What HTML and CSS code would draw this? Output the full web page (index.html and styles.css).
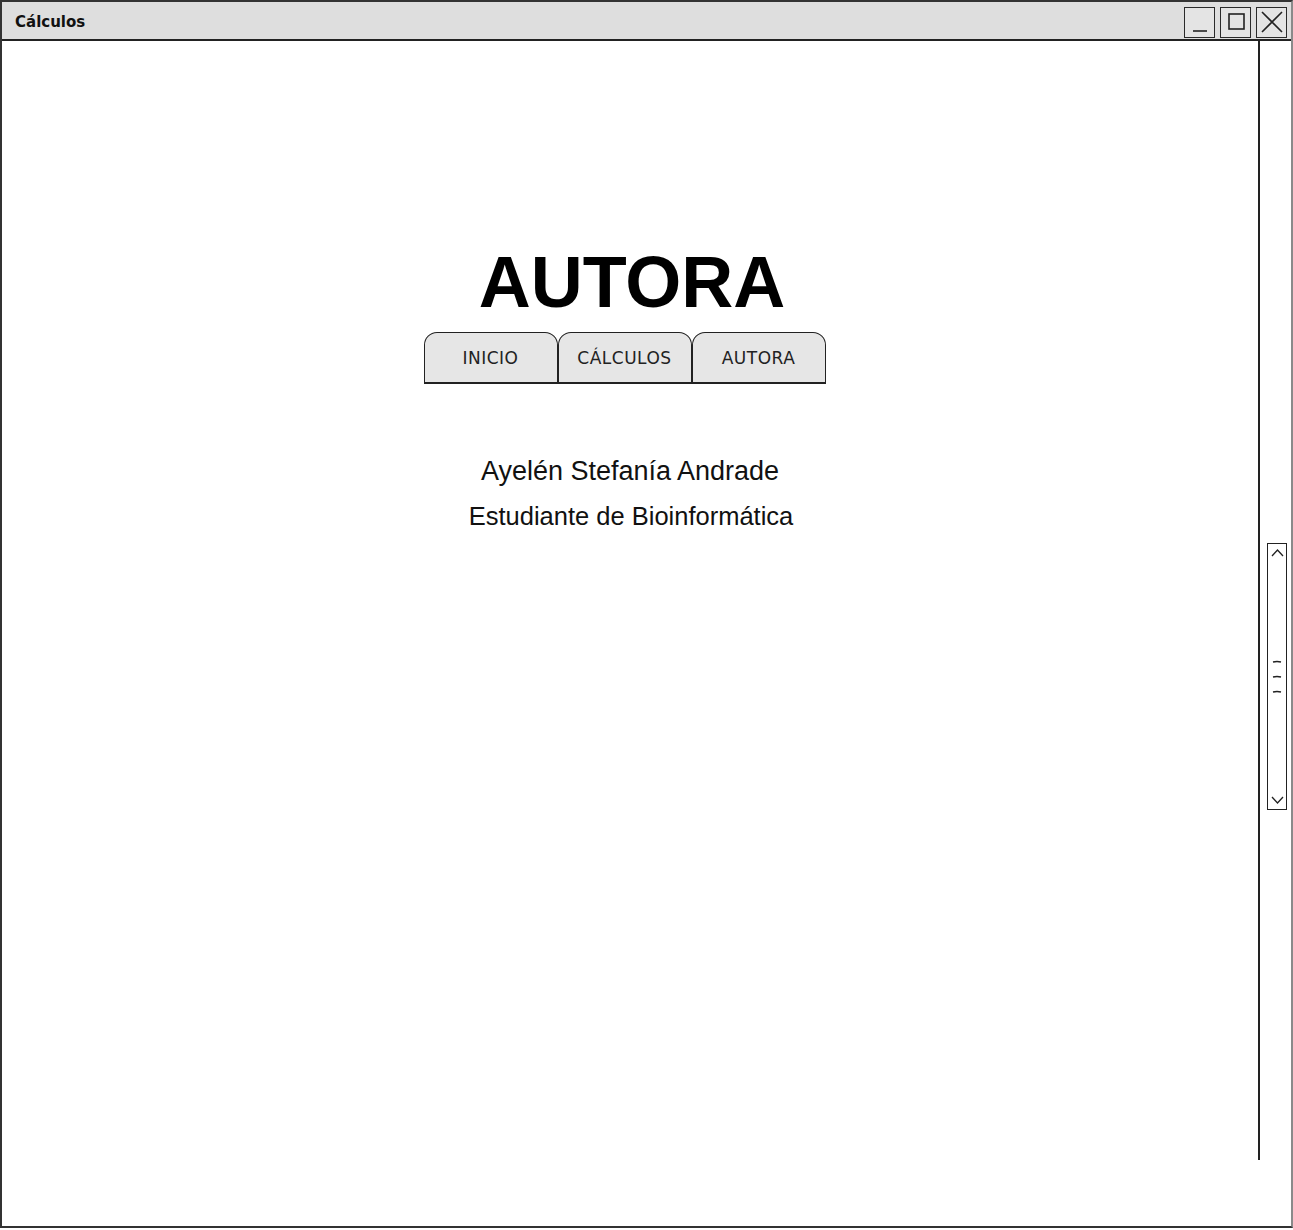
FILE: index.html
```html
<!DOCTYPE html>
<html lang="es">
<head>
<meta charset="utf-8">
<title>Cálculos</title>
<link rel="stylesheet" href="styles.css">
</head>
<body>
<div class="window">
  <div class="titlebar">
    <span class="title">Cálculos</span>
    <div class="winbtns">
      <span class="winbtn"><svg width="28" height="28" viewBox="0 0 28 28"><path d="M7 23 H21" stroke="#222" stroke-width="1.6" fill="none"/></svg></span>
      <span class="winbtn"><svg width="28" height="28" viewBox="0 0 28 28"><rect x="7" y="6" width="15" height="15" stroke="#222" stroke-width="1.6" fill="none"/></svg></span>
      <span class="winbtn"><svg width="28" height="28" viewBox="0 0 28 28"><path d="M4 4 L24 24 M24 4 L4 24" stroke="#222" stroke-width="1.6" fill="none"/></svg></span>
    </div>
  </div>
  <div class="body">
    <main class="content">
      <h1 class="heading">AUTORA</h1>
      <nav class="tabs">
        <span class="tab">INICIO</span>
        <span class="tab">CÁLCULOS</span>
        <span class="tab">AUTORA</span>
      </nav>
      <p class="line first">Ayelén Stefanía Andrade</p>
      <p class="line second">Estudiante de Bioinformática</p>
    </main>
    <aside class="side">
      <div class="scrollbar">
        <svg class="chev" width="19" height="14" viewBox="0 0 19 14"><path d="M4 10 L9.5 4 L15 10" stroke="#222" stroke-width="1.3" fill="none"/></svg>
        <svg class="grip" width="19" height="36" viewBox="0 0 19 36"><path d="M5 3 Q9 2 13 3 M5 18 Q9 17 13 18 M5 33 Q9 32 13 33" stroke="#222" stroke-width="1.3" fill="none"/></svg>
        <svg class="chev" width="19" height="14" viewBox="0 0 19 14"><path d="M4 4 L9.5 10 L15 4" stroke="#222" stroke-width="1.3" fill="none"/></svg>
      </div>
    </aside>
  </div>
</div>
</body>
</html>
```

FILE: styles.css
```css
html, body {
  margin: 0;
  padding: 0;
  background: #ffffff;
}

.window {
  width: 1293px;
  height: 1228px;
  box-sizing: border-box;
  border: 2px solid #333333;
  border-right: 2px solid #8a8a8a;
  display: flex;
  flex-direction: column;
  background: #ffffff;
}

.titlebar {
  height: 37px;
  flex: none;
  background: #dedede;
  border-bottom: 2px solid #222222;
  display: flex;
  align-items: center;
  padding-left: 13px;
}

.title {
  font-family: "Comic Sans MS", "DejaVu Sans", sans-serif;
  font-weight: bold;
  font-size: 15px;
  color: #111111;
  padding-top: 3px;
}

.winbtns {
  margin-left: auto;
  display: flex;
  gap: 5px;
  margin-right: 4px;
  padding-top: 3px;
}

.winbtn {
  width: 31px;
  height: 31px;
  box-sizing: border-box;
  border: 1.5px solid #2a2a2a;
  background: #e4e4e4;
  display: flex;
  align-items: center;
  justify-content: center;
}

.winbtn svg {
  display: block;
}

.body {
  flex: 1;
  display: flex;
  min-height: 0;
}

.content {
  flex: 1;
  display: flex;
  flex-direction: column;
  align-items: center;
  padding-top: 201px;
}

.heading {
  margin: 0 0 0 4px;
  font-family: "Liberation Sans", Arial, sans-serif;
  font-weight: bold;
  font-size: 72px;
  line-height: 80px;
  color: #000000;
}

.tabs {
  display: flex;
  margin-top: 10px;
  margin-left: -11px;
}

.tab {
  width: 132px;
  height: 49px;
  box-sizing: content-box;
  border: 1.5px solid #222222;
  border-bottom-width: 2px;
  border-radius: 13px 13px 0 0;
  background: #e6e6e6;
  display: flex;
  align-items: center;
  justify-content: center;
  font-family: "Comic Sans MS", "DejaVu Sans", sans-serif;
  font-size: 17px;
  letter-spacing: 0.5px;
  color: #222222;
}

.line {
  margin: 0;
  font-family: "Liberation Sans", Arial, sans-serif;
  font-size: 27px;
  line-height: 45px;
  color: #111111;
}

.line.first {
  margin-top: 65px;
}

.line.second {
  font-size: 25.5px;
  margin-left: 2px;
}

.side {
  width: 33px;
  flex: none;
  align-self: flex-start;
  height: 1119px;
  border-left: 2px solid #222222;
  padding-left: 7px;
  box-sizing: border-box;
}

.scrollbar {
  margin-top: 502px;
  width: 18px;
  height: 261px;
  border: 1.5px solid #222222;
  display: flex;
  flex-direction: column;
  align-items: center;
  justify-content: space-between;
  padding: 2px 0;
  box-sizing: content-box;
}

.scrollbar svg {
  display: block;
}
```
